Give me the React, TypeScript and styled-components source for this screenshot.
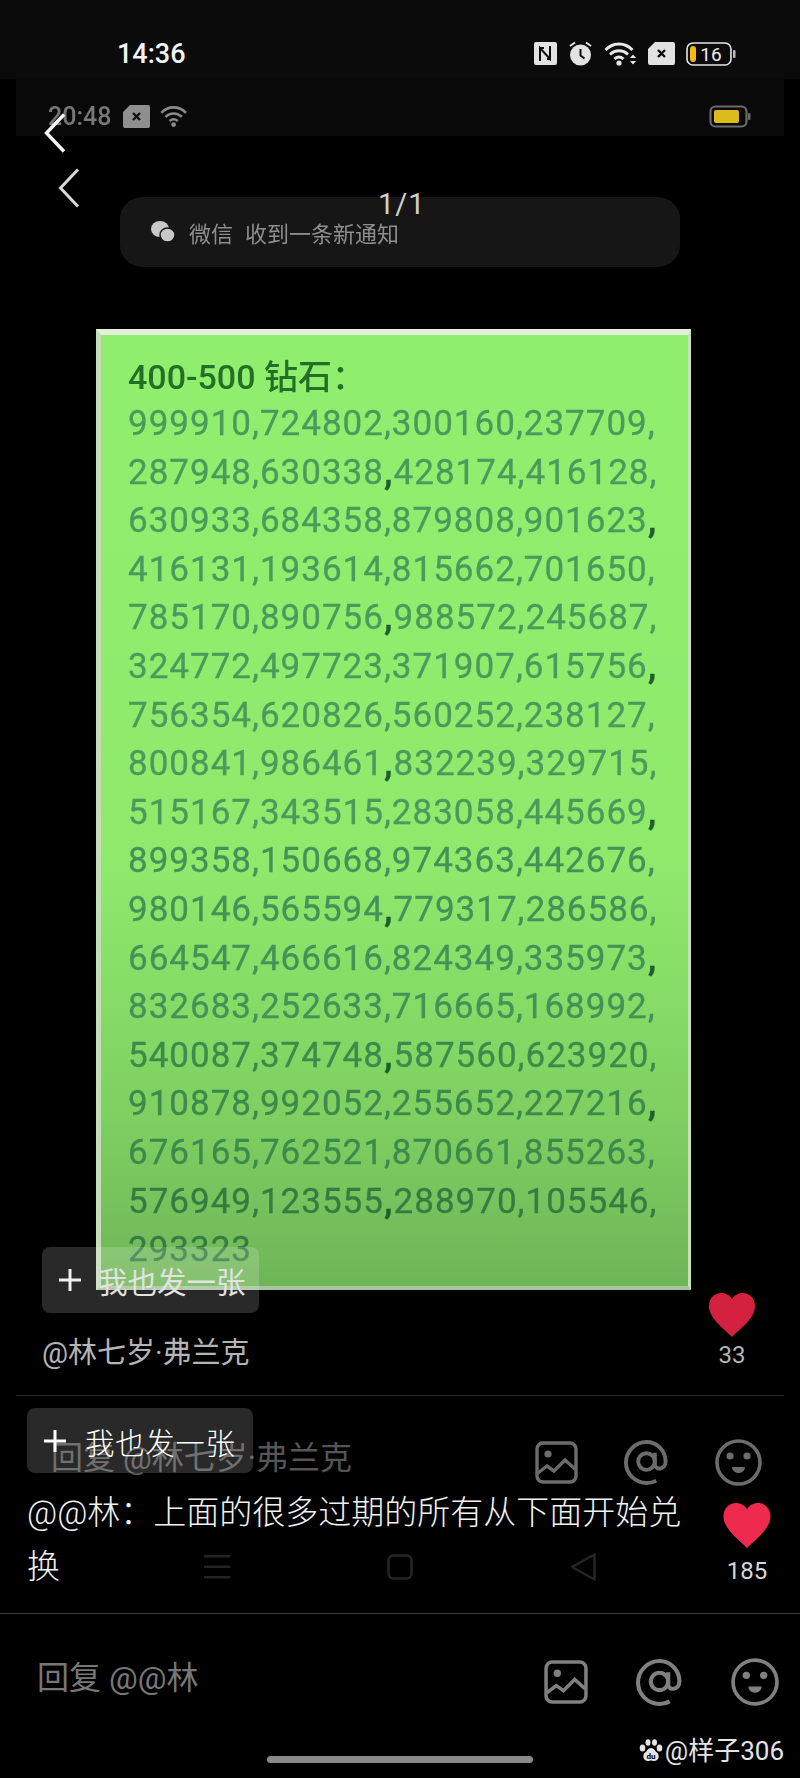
import React from 'react';
import styled, { createGlobalStyle } from 'styled-components';

const GlobalStyle = createGlobalStyle`
  html, body {
    margin: 0;
    padding: 0;
    background: #000;
  }
  * {
    box-sizing: border-box;
  }
`

const SANS = `Roboto, "Noto Sans CJK SC", sans-serif`

const Screen = styled.div`
  position: relative;
  width: 800px;
  height: 1778px;
  overflow: hidden;
  background: #000;
  font-family: ${SANS};
`

const StatusBar = styled.div`
  height: 79px;
  padding: 0 64px 0 117px;
  display: flex;
  align-items: center;
  justify-content: space-between;
  background: #0b0b0b;
`

const Time = styled.div`
  font-size: 27px;
  font-weight: 500;
  color: #f4f4f4;
  padding-top: 28px;
  line-height: 52px;
`

const StatusIcons = styled.div`
  display: flex;
  align-items: center;
  gap: 11px;
  padding-top: 28px;
`

const InnerBar = styled.div`
  height: 57px;
  margin: 0 16px;
  padding: 0 33px 0 32px;
  display: flex;
  align-items: center;
  justify-content: space-between;
  background: #090909;
`

const InnerLeft = styled.div`
  display: flex;
  align-items: center;
  gap: 9px;
  padding-top: 17px;
`

const InnerTime = styled.span`
  font-size: 25px;
  font-weight: 500;
  color: #777;
  filter: blur(0.4px);
  width: 65px;
`

const BatteryWrap = styled.div`
  padding-top: 17px;
  display: flex;
`

const BackIcon = styled.svg<{ $left: number; $top: number }>`
  position: absolute;
  left: ${p => p.$left}px;
  top: ${p => p.$top}px;
  width: 22px;
  height: 40px;
`

const PageCount = styled.div`
  position: absolute;
  left: 378px;
  top: 187px;
  font-size: 29px;
  letter-spacing: 1px;
  color: #d0d0d0;
  line-height: 34px;
`

const NoticePill = styled.div`
  width: 560px;
  height: 70px;
  margin: 61px 0 0 120px;
  padding: 0 0 0 31px;
  display: flex;
  align-items: center;
  gap: 14px;
  border-radius: 22px;
  background: #161616;
  color: #8e8e8e;
  font-size: 22px;
  filter: blur(0.3px);
`

const NoticeText = styled.span`
  display: flex;
  gap: 12px;
`

const Sheet = styled.div`
  width: 595px;
  height: 961px;
  margin: 62px 0 0 96px;
  padding: 19px 0 0 27px;
  border-style: solid;
  border-width: 6px 3px 4px 5px;
  border-color: #e4efdc #c8e0bc #a9c49e #c4dcb8;
  background: linear-gradient(#90ee6e 0%, #8fea6c 55%, #7ed061 82%, #6fb558 100%);
  filter: blur(0.6px);
`

const SheetTitle = styled.div`
  font-size: 34px;
  line-height: 46px;
  font-weight: 500;
  color: #236f25;
  height: 46px;
`

const SheetLine = styled.div`
  font-size: 35px;
  line-height: 48.6px;
  letter-spacing: 1px;
  color: #4a9a5c;
  -webkit-text-stroke: 0.3px currentColor;
  white-space: nowrap;

  &:nth-child(n+11) {
    color: #439257;
  }
  &:nth-child(n+15) {
    color: #3c8a4c;
  }
  &:nth-child(n+18) {
    color: #357c42;
  }
`

const DarkComma = styled.span`
  color: #1f5f2c;
  font-weight: 700;
`

const AuthorRow = styled.div`
  height: 105px;
  padding: 0 45px 0 42px;
  display: flex;
  justify-content: space-between;
  align-items: flex-start;
`

const AuthorName = styled.div`
  margin-top: 44px;
  font-size: 29px;
  line-height: 38px;
  color: #b4b4b4;
`

const LikeBox = styled.div<{ $top: number }>`
  margin-top: ${p => p.$top}px;
  display: flex;
  flex-direction: column;
  align-items: center;
`

const LikeCount = styled.div<{ $bright?: boolean }>`
  margin-top: ${p => (p.$bright ? 8 : 3)}px;
  font-size: 24px;
  line-height: 30px;
  color: ${p => (p.$bright ? '#d8d8d8' : '#b4b4b4')};
`

const Rule = styled.div<{ $inset: number; $color: string }>`
  height: 1px;
  margin: 0 ${p => p.$inset}px;
  background: ${p => p.$color};
`

const ReplyRow = styled.div<{ $height: number; $top: number; $left: number; $right: number; $gap: number }>`
  height: ${p => p.$height}px;
  padding: ${p => p.$top}px ${p => p.$right}px 0 ${p => p.$left}px;
  display: flex;
  align-items: center;
  gap: ${p => p.$gap}px;
`

const ReplyHint = styled.div<{ $color: string; $size: number }>`
  flex: 1;
  font-size: ${p => p.$size}px;
  color: ${p => p.$color};
  margin-top: -15px;
`

const CommentRow = styled.div`
  height: 127px;
  padding: 0 29px 0 27px;
  display: flex;
  justify-content: space-between;
  align-items: flex-start;
`

const CommentText = styled.div`
  width: 670px;
  font-size: 33px;
  line-height: 54px;
  font-weight: 300;
  color: #f2f2f2;
`

const PostButton = styled.div<{ $left: number; $top: number; $width: number; $height: number; $crisp?: boolean }>`
  position: absolute;
  left: ${p => p.$left}px;
  top: ${p => p.$top}px;
  width: ${p => p.$width}px;
  height: ${p => p.$height}px;
  padding-left: 15px;
  display: flex;
  align-items: center;
  gap: ${p => (p.$crisp ? 17 : 15)}px;
  border-radius: 8px;
  background: rgba(255, 255, 255, 0.16);
  color: ${p => (p.$crisp ? '#fff' : '#e2e2e2')};
  font-size: 29.500px;
  letter-spacing: ${p => (p.$crisp ? 0.6 : 0)}px;
  font-weight: ${p => (p.$crisp ? 300 : 400)};
`

const PostPlus = styled.svg`
  width: 26px;
  height: 26px;
  flex: none;
`

const NavKeys = styled.div`
  position: absolute;
  left: 204px;
  top: 1553px;
  width: 392px;
  display: flex;
  justify-content: space-between;
  align-items: center;
`

const Watermark = styled.div`
  position: absolute;
  right: 16px;
  top: 1735px;
  display: flex;
  align-items: center;
  gap: 2px;
  font-size: 26px;
  line-height: 32px;
  color: #e4e4e4;
`

const HomeBar = styled.div`
  position: absolute;
  left: 267px;
  top: 1756px;
  width: 266px;
  height: 7px;
  border-radius: 4px;
  background: #8a8a8a;
`

const SHEET_LINES = [
  '999910,724802,300160,237709,',
  '287948,630338,428174,416128,',
  '630933,684358,879808,901623,',
  '416131,193614,815662,701650,',
  '785170,890756,988572,245687,',
  '324772,497723,371907,615756,',
  '756354,620826,560252,238127,',
  '800841,986461,832239,329715,',
  '515167,343515,283058,445669,',
  '899358,150668,974363,442676,',
  '980146,565594,779317,286586,',
  '664547,466616,824349,335973,',
  '832683,252633,716665,168992,',
  '540087,374748,587560,623920,',
  '910878,992052,255652,227216,',
  '676165,762521,870661,855263,',
  '576949,123555,288970,105546,',
  '293323',
]

const SimIcon = ({ w, h, fill, mark }: { w: number; h: number; fill: string; mark: string }) => (
  <svg width={w} height={h} viewBox="0 0 27 23">
    <path d="M7 0H25a2 2 0 0 1 2 2V21a2 2 0 0 1-2 2H2a2 2 0 0 1-2-2V7z" fill={fill} />
    <path d="M10 8l7 7M17 8l-7 7" stroke={mark} strokeWidth="2.400" />
  </svg>
)

const WifiIcon = ({ w, h, color, arrows }: { w: number; h: number; color: string; arrows?: boolean }) => (
  <svg width={w} height={h} viewBox="0 0 33 25" fill="none">
    <path d="M1.500 9C9 1 21 1 28.500 9M6 13.500c5-5 13-5 18 0M10.500 18c3-2.600 6-2.600 9 0" stroke={color} strokeWidth="2.800" />
    <circle cx="15" cy="22" r="2.600" fill={color} />
    {arrows && <path d="M26 17l3-3.500 3 3.500zM26 20l3 3.500 3-3.500z" fill={color} />}
  </svg>
)

const ImageIcon = ({ w, h, color }: { w: number; h: number; color: string }) => (
  <svg width={w} height={h} viewBox="0 0 43 43" fill="none">
    <rect x="2" y="2" width="39" height="39" rx="6" stroke={color} strokeWidth="3.400" />
    <circle cx="13" cy="13" r="3.600" fill={color} />
    <path d="M3 32l9-7 7 5 11-11 10 9" stroke={color} strokeWidth="3.400" />
  </svg>
)

const AtIcon = ({ w, h, color }: { w: number; h: number; color: string }) => (
  <svg width={w} height={h} viewBox="0 0 46 46" fill="none">
    <circle cx="23" cy="22" r="8.500" stroke={color} strokeWidth="4" />
    <path d="M31.500 13v12c0 6 11 6 11-3C42.500 10 33 2 23 2 11.500 2 2 11.500 2 23s9.500 21 21 21c4 0 7-.8 10-2.500" stroke={color} strokeWidth="4" />
  </svg>
)

const SmileIcon = ({ w, h, color }: { w: number; h: number; color: string }) => (
  <svg width={w} height={h} viewBox="0 0 47 47" fill="none">
    <circle cx="23.500" cy="23.500" r="21.500" stroke={color} strokeWidth="3.600" />
    <circle cx="15" cy="17" r="3.600" fill={color} />
    <circle cx="32" cy="17" r="3.600" fill={color} />
    <path d="M17 28h13c0 3.500-3 6-6.500 6S17 31.500 17 28z" fill={color} />
  </svg>
)

const Heart = ({ w, h, color }: { w: number; h: number; color: string }) => (
  <svg width={w} height={h} viewBox="0 0 46 44">
    <path d="M23 44C14 35 0 25 0 13 0 5 6 0 12 0c5 0 9 2.500 11 6 2-3.500 6-6 11-6 6 0 12 5 12 13 0 12-14 22-23 31z" fill={color} />
  </svg>
)

const Paw = () => (
  <svg width="24" height="24" viewBox="0 0 24 24" fill="#e4e4e4">
    <ellipse cx="3.500" cy="9" rx="2.800" ry="3.500" />
    <ellipse cx="9" cy="3.500" rx="2.500" ry="3.300" />
    <ellipse cx="15.500" cy="3.500" rx="2.500" ry="3.300" />
    <ellipse cx="20.500" cy="9" rx="2.800" ry="3.500" />
    <path d="M12 9c3 0 4 3 6 4.500 3 2.500 2 8.500-3 8.500-1.500 0-2-.5-3-.5s-1.500.5-3 .5c-5 0-6-6-3-8.500C8 12 9 9 12 9z" />
    <text x="12" y="20" fontSize="8" fontWeight="700" textAnchor="middle" fill="#000" fontFamily="Roboto, sans-serif">du</text>
  </svg>
)

// the photographed sheet repeats every third row: one comma on it came out darker
const darkCommaAt = (row: number) => (row % 3 === 1 ? 1 : row % 3 === 2 ? 3 : -1)

const renderSheetLine = (line: string, row: number) => {
  const parts = line.split(',')
  return parts.map((part, idx) => {
    if (idx === parts.length - 1) return <span key={idx}>{part}</span>
    return (
      <span key={idx}>
        {part}
        {idx === darkCommaAt(row) ? <DarkComma>,</DarkComma> : ','}
      </span>
    )
  })
}

function App() {
  return (
    <Screen>
      <GlobalStyle />
      <StatusBar>
        <Time>14:36</Time>
        <StatusIcons>
          <svg width="23" height="23" viewBox="0 0 23 23">
            <rect width="23" height="23" rx="2" fill="#e2e2e2" />
            <path d="M6 19V6l10 11V4M6 6h4M16 17h-3" stroke="#0b0b0b" strokeWidth="2" fill="none" />
          </svg>
          <svg width="25" height="25" viewBox="0 0 25 25">
            <circle cx="12.500" cy="14" r="10.500" fill="#e2e2e2" />
            <path d="M12.500 8v6.500l4 3" stroke="#0b0b0b" strokeWidth="2" fill="none" />
            <path d="M2 5l5-3.500M23 5l-5-3.500" stroke="#e2e2e2" strokeWidth="2" />
          </svg>
          <WifiIcon w={33} h={25} color="#e8e8e8" arrows />
          <SimIcon w={27} h={23} fill="#e2e2e2" mark="#0b0b0b" />
          <svg width="50" height="24" viewBox="0 0 50 24">
            <rect x="1" y="1" width="44" height="22" rx="6" fill="none" stroke="#e6e6e6" strokeWidth="1.600" />
            <rect x="4" y="4" width="6" height="16" rx="3" fill="#f5b916" />
            <rect x="47" y="8" width="2.500" height="8" rx="1" fill="#bbb" />
            <text x="25" y="19" fontSize="19" textAnchor="middle" fill="#eee" fontFamily="Roboto, sans-serif">16</text>
          </svg>
        </StatusIcons>
      </StatusBar>

      <InnerBar>
        <InnerLeft>
          <InnerTime>20:48</InnerTime>
          <SimIcon w={29} h={23} fill="#8f8f8f" mark="#111" />
          <WifiIcon w={30} h={24} color="#8a8a8a" />
        </InnerLeft>
        <BatteryWrap>
          <svg width="42" height="23" viewBox="0 0 42 23">
            <rect x="1.500" y="1.500" width="36" height="20" rx="5" fill="none" stroke="#6b6b6b" strokeWidth="2.200" />
            <rect x="5" y="5" width="25" height="13" rx="2" fill="#dcbc1c" />
            <rect x="39" y="8" width="2.500" height="7" rx="1" fill="#666" />
          </svg>
        </BatteryWrap>
      </InnerBar>

      <BackIcon $left={44} $top={113} viewBox="0 0 22 40" fill="none">
        <path d="M20 1.500L2.500 20 20 38.500" stroke="#f4f4f4" strokeWidth="3.400" />
      </BackIcon>
      <BackIcon $left={58} $top={168} viewBox="0 0 22 40" fill="none">
        <path d="M20 1.500L2.500 20 20 38.500" stroke="#d8d8d8" strokeWidth="3" />
      </BackIcon>

      <NoticePill>
        <svg width="24" height="22" viewBox="0 0 24 22" fill="#c8c8c8">
          <ellipse cx="9" cy="8" rx="9" ry="8" />
          <ellipse cx="16.500" cy="14" rx="7.500" ry="7" stroke="#161616" strokeWidth="1.500" />
        </svg>
        <NoticeText>
          <span>微信</span>
          <span>收到一条新通知</span>
        </NoticeText>
      </NoticePill>
      <PageCount>1/1</PageCount>

      <Sheet>
        <SheetTitle>400-500 钻石：</SheetTitle>
        {SHEET_LINES.map((line, row) => (
          <SheetLine key={line}>{renderSheetLine(line, row)}</SheetLine>
        ))}
      </Sheet>

      <AuthorRow>
        <AuthorName>@林七岁·弗兰克</AuthorName>
        <LikeBox $top={3}>
          <Heart w={46} h={44} color="#d4213f" />
          <LikeCount>33</LikeCount>
        </LikeBox>
      </AuthorRow>
      <Rule $inset={16} $color="#2a2a2a" />

      <ReplyRow $height={90} $top={42} $left={51} $right={38} $gap={46}>
        <ReplyHint $color="#555" $size={32}>回复 @林七岁·弗兰克</ReplyHint>
        <ImageIcon w={43} h={43} color="#6c6c6c" />
        <AtIcon w={45} h={45} color="#6c6c6c" />
        <SmileIcon w={47} h={47} color="#6c6c6c" />
      </ReplyRow>

      <CommentRow>
        <CommentText>@@林：上面的很多过期的所有从下面开始兑换</CommentText>
        <LikeBox $top={17}>
          <Heart w={48} h={45} color="#ee2a4e" />
          <LikeCount $bright>185</LikeCount>
        </LikeBox>
      </CommentRow>
      <Rule $inset={0} $color="#3a3a3a" />

      <ReplyRow $height={136} $top={0} $left={37} $right={21} $gap={48}>
        <ReplyHint $color="#777" $size={32}>回复 @@林</ReplyHint>
        <ImageIcon w={44} h={44} color="#808080" />
        <AtIcon w={47} h={47} color="#808080" />
        <SmileIcon w={48} h={48} color="#808080" />
      </ReplyRow>

      <PostButton $left={42} $top={1247} $width={217} $height={66}>
        <PostPlus viewBox="0 0 26 26" fill="none">
          <path d="M13 2v22M2 13h22" stroke="#eee" strokeWidth="3" />
        </PostPlus>
        我也发一张
      </PostButton>
      <PostButton $left={27} $top={1408} $width={226} $height={65} $crisp>
        <PostPlus viewBox="0 0 26 26" fill="none">
          <path d="M13 2v22M2 13h22" stroke="#fff" strokeWidth="3" />
        </PostPlus>
        我也发一张
      </PostButton>

      <NavKeys>
        <svg width="26" height="24" viewBox="0 0 26 24" fill="#232323">
          <rect width="26" height="2.500" />
          <rect y="10.500" width="26" height="2.500" />
          <rect y="21" width="26" height="2.500" />
        </svg>
        <svg width="26" height="26" viewBox="0 0 26 26" fill="none">
          <rect x="1.500" y="1.500" width="23" height="23" rx="5" stroke="#262626" strokeWidth="2.500" />
        </svg>
        <svg width="26" height="28" viewBox="0 0 26 28" fill="none">
          <path d="M24.500 1.500v25L2 14z" stroke="#262626" strokeWidth="2.500" strokeLinejoin="round" />
        </svg>
      </NavKeys>

      <Watermark>
        <Paw />
        @样子306
      </Watermark>
      <HomeBar />
    </Screen>
  );
}

export default App;
